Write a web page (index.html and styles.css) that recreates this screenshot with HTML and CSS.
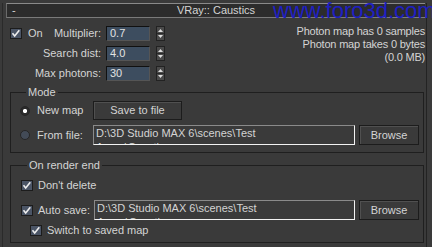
FILE: index.html
```html
<!DOCTYPE html>
<html>
<head>
    <title>VRay:: Caustics</title>
    <meta charset="utf-8">
    <link rel="stylesheet" href="styles.css">
</head>
<body>
    <div class="rollout">
        <div class="titlebar">
            <span class="collapse">-</span>
            <span class="title">VRay:: Caustics</span>
        </div>
        <div class="watermark">www.foro3d.com</div>

        <div class="top">
            <div class="params">
                <div class="label-cell">
                    <span class="check-wrap">
                        <svg class="check" width="12" height="11" viewBox="0 0 12 11"><rect x="0.5" y="0.5" width="11" height="10" fill="#4b5566" stroke="#1c1c1c"/><path d="M2.5 5.2 L4.7 8 L9.3 2.3" fill="none" stroke="#eeeeee" stroke-width="1.6"/></svg>
                        On
                    </span>
                    Multiplier:
                </div>
                <div class="spin-field">0.7</div>
                <svg class="spinner" width="9" height="15" viewBox="0 0 9 15"><rect x="0.5" y="0.5" width="8" height="14" fill="#4a4a4a" stroke="#222"/><path d="M2 6 L4.5 3 L7 6Z" fill="#ddd"/><line x1="1" x2="8" y1="7.5" y2="7.5" stroke="#2a2a2a"/><path d="M2 9 L4.5 12 L7 9Z" fill="#ddd"/></svg>

                <div class="label-cell">Search dist:</div>
                <div class="spin-field">4.0</div>
                <svg class="spinner" width="9" height="15" viewBox="0 0 9 15"><rect x="0.5" y="0.5" width="8" height="14" fill="#4a4a4a" stroke="#222"/><path d="M2 6 L4.5 3 L7 6Z" fill="#ddd"/><line x1="1" x2="8" y1="7.5" y2="7.5" stroke="#2a2a2a"/><path d="M2 9 L4.5 12 L7 9Z" fill="#ddd"/></svg>

                <div class="label-cell">Max photons:</div>
                <div class="spin-field">30</div>
                <svg class="spinner" width="9" height="15" viewBox="0 0 9 15"><rect x="0.5" y="0.5" width="8" height="14" fill="#4a4a4a" stroke="#222"/><path d="M2 6 L4.5 3 L7 6Z" fill="#ddd"/><line x1="1" x2="8" y1="7.5" y2="7.5" stroke="#2a2a2a"/><path d="M2 9 L4.5 12 L7 9Z" fill="#ddd"/></svg>
            </div>

            <div class="stats">
                <div>Photon map has 0 samples</div>
                <div>Photon map takes 0 bytes</div>
                <div>(0.0 MB)</div>
            </div>
        </div>

        <fieldset class="group mode">
            <legend>Mode</legend>
            <div class="row first">
                <span class="opt"><span class="radio on"></span>New map</span>
                <div class="button save">Save to file</div>
            </div>
            <div class="row">
                <span class="opt"><span class="radio"></span>From file:</span>
                <div class="path-field">D:\3D Studio MAX 6\scenes\Test Arrow\Caustics.vrmap</div>
                <div class="button browse">Browse</div>
            </div>
        </fieldset>

        <fieldset class="group render-end">
            <legend>On render end</legend>
            <div class="row check-row">
                <span class="opt">
                    <svg class="check" width="12" height="11" viewBox="0 0 12 11"><rect x="0.5" y="0.5" width="11" height="10" fill="#4b5566" stroke="#1c1c1c"/><path d="M2.5 5.2 L4.7 8 L9.3 2.3" fill="none" stroke="#eeeeee" stroke-width="1.6"/></svg>
                    Don't delete
                </span>
            </div>
            <div class="row auto">
                <span class="opt">
                    <svg class="check" width="12" height="11" viewBox="0 0 12 11"><rect x="0.5" y="0.5" width="11" height="10" fill="#4b5566" stroke="#1c1c1c"/><path d="M2.5 5.2 L4.7 8 L9.3 2.3" fill="none" stroke="#eeeeee" stroke-width="1.6"/></svg>
                    Auto save:
                </span>
                <div class="path-field">D:\3D Studio MAX 6\scenes\Test Arrow\Caustics.vrmap</div>
                <div class="button browse">Browse</div>
            </div>
            <div class="row check-row switch">
                <span class="opt">
                    <svg class="check" width="12" height="11" viewBox="0 0 12 11"><rect x="0.5" y="0.5" width="11" height="10" fill="#4b5566" stroke="#1c1c1c"/><path d="M2.5 5.2 L4.7 8 L9.3 2.3" fill="none" stroke="#eeeeee" stroke-width="1.6"/></svg>
                    Switch to saved map
                </span>
            </div>
        </fieldset>
    </div>
</body>
</html>
```

FILE: styles.css
```css
body {
    margin: 0;
    background: #3a3a3a;
    color: #d4d4d4;
    font-family: "Liberation Sans", Arial, sans-serif;
    font-size: 11px;
    line-height: 13px;
    width: 432px;
    height: 247px;
    overflow: hidden;
}
.rollout {
    position: relative;
    margin-left: 2px;
    width: 425px;
    height: 247px;
    box-sizing: border-box;
    border-left: 1px solid #2a2a2a;
    border-right: 1px solid #232323;
}
.titlebar {
    margin: 3px 0 0 3px;
    width: 419px;
    height: 15px;
    box-sizing: border-box;
    background: #2c2c2c;
    border-top: 1px solid #8a8a8a;
    border-bottom: 1px solid #7a7a7a;
    border-left: 1px solid #6a6a6a;
    display: flex;
    align-items: center;
}
.collapse {
    width: 16px;
    padding-left: 5px;
    box-sizing: border-box;
}
.title {
    flex: 1;
    text-align: center;
    padding-right: 16px;
}
.watermark {
    position: absolute;
    left: 270px;
    top: -3px;
    font-size: 22px;
    line-height: 22px;
    color: #1f1fc2;
    white-space: nowrap;
}

.top {
    display: flex;
    justify-content: space-between;
    padding: 8px 1px 0 7px;
}
.params {
    display: grid;
    grid-template-columns: 91px 44px 9px;
    grid-auto-rows: 15px;
    column-gap: 5px;
    row-gap: 5px;
}
.label-cell {
    display: flex;
    align-items: center;
    justify-content: flex-end;
}
.check-wrap {
    display: flex;
    align-items: center;
    gap: 6px;
    margin-right: auto;
}
.check {
    display: block;
    flex: none;
}
.spin-field {
    background: #3d4d5f;
    border-top: 1px solid #111;
    border-left: 1px solid #111;
    border-right: 1px solid #555;
    border-bottom: 1px solid #555;
    padding-left: 3px;
    color: #e2e2e2;
    line-height: 13px;
}
.spinner {
    display: block;
    margin-left: 1px;
}
.stats {
    margin-top: -1px;
    text-align: right;
    letter-spacing: -0.2px;
}

.group {
    margin: 0 0 0 7px;
    width: 414px;
    box-sizing: border-box;
    border: 1px solid #1f1f1f;
    padding: 2px 4px 7px 9px;
}
.group legend {
    padding: 0 2px;
    margin-left: 6px;
    line-height: 13px;
}
.mode {
    margin-top: 5px;
}
.render-end {
    margin-top: 6px;
    padding: 7px 4px 5px 10px;
}
.row {
    display: flex;
    align-items: center;
    margin-top: 5px;
}
.row.first {
    margin-top: 0;
}
.opt {
    width: 73px;
    flex: none;
    display: flex;
    align-items: center;
    gap: 7px;
}
.render-end .opt {
    gap: 5px;
}
.radio {
    width: 10px;
    height: 10px;
    box-sizing: border-box;
    border-radius: 50%;
    border: 1px solid #262626;
    background: #434b57;
}
.radio.on {
    background: radial-gradient(circle, #ffffff 0 1.8px, #2b2b2b 2.4px);
}
.button {
    box-sizing: border-box;
    border: 1px solid #1c1c1c;
    box-shadow: inset 1px 1px 0 #505050;
    text-align: center;
    display: flex;
    align-items: center;
    justify-content: center;
}
.save {
    width: 89px;
    height: 19px;
}
.path-field {
    width: 262px;
    height: 20px;
    box-sizing: border-box;
    border-top: 1px solid #8a8a8a;
    border-left: 1px solid #8a8a8a;
    border-right: 1px solid #f2f2f2;
    border-bottom: 1px solid #f2f2f2;
    padding: 0 2px;
    overflow: hidden;
    line-height: 14px;
    flex: none;
}
.browse {
    width: 60px;
    height: 20px;
    margin-left: 4px;
}
.check-row {
    height: 13px;
    margin-top: 0;
}
.auto {
    margin-top: 8px;
}
.auto .path-field {
    width: 261px;
}
.switch {
    margin-top: 4px;
}
.switch .opt {
    width: auto;
    margin-left: 9px;
}
.render-end .check-row .opt {
    width: auto;
}
```
